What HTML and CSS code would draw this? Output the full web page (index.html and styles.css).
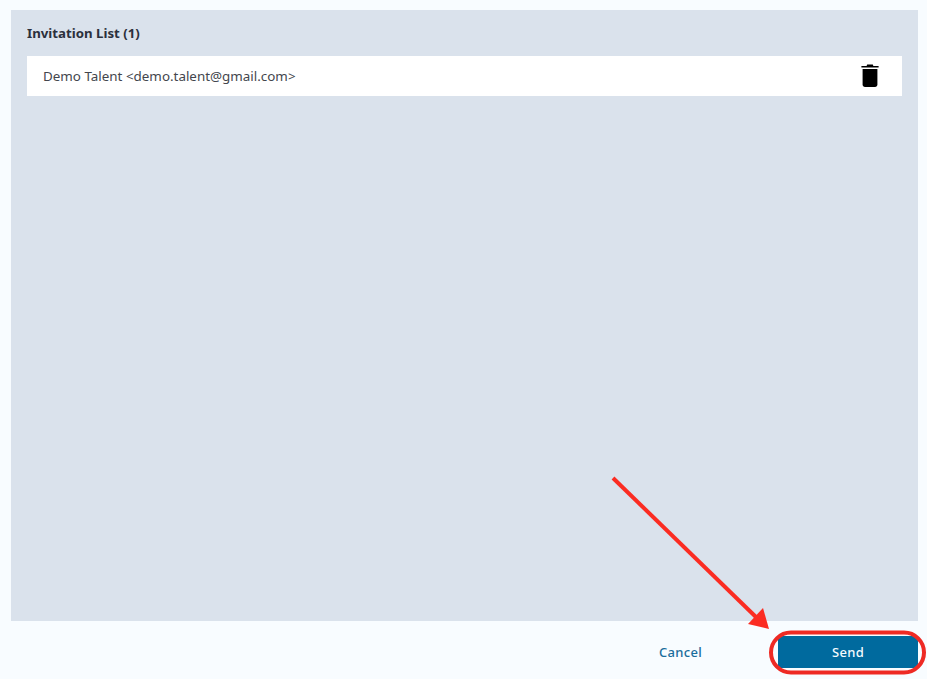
FILE: index.html
```html
<!DOCTYPE html>
<html lang="en">
<head>
<meta charset="utf-8">
<title>Invitation List</title>
<link rel="stylesheet" href="styles.css">
</head>
<body>
<div class="page">
  <section class="panel">
    <h2 class="panel-title">Invitation List (1)</h2>
    <div class="invite-row">
      <span class="invite-text">Demo Talent &lt;demo.talent@gmail.com&gt;</span>
      <button class="icon-btn" aria-label="Delete">
        <svg width="18" height="24" viewBox="0 0 18 24" class="trash"><path d="M5.6 2 L6.2 0.4 H11.8 L12.4 2 H17.6 V3.6 H0.4 V2 Z" fill="#000"/><path d="M1.6 5 H16.4 V20.6 C16.4 22.2 15.4 23 14 23 H4 C2.6 23 1.6 22.2 1.6 20.6 Z" fill="#000"/></svg>
      </button>
    </div>
  </section>
  <footer class="actions">
    <a class="cancel">Cancel</a>
    <button class="send">Send</button>
  </footer>
  <svg class="annotation" width="927" height="679" viewBox="0 0 927 679">
    <rect x="771" y="632.5" width="153" height="40" rx="20" fill="none" stroke="#ee2a24" stroke-width="4"/>
    <line x1="613" y1="478" x2="758" y2="619" stroke="#fb2c22" stroke-width="4"/>
    <polygon points="769,629 748,624 763,608" fill="#fb2c22"/>
  </svg>
</div>
</body>
</html>
```

FILE: styles.css
```css
* { box-sizing: border-box; }
html, body { margin: 0; padding: 0; }
body {
  background: #f8fcff;
  font-family: "Noto Sans", "Liberation Sans", sans-serif;
  color: #2b2f38;
}
.page {
  position: relative;
  width: 927px;
  height: 679px;
  padding: 10px 9px 0 11px;
  overflow: hidden;
}
.panel {
  height: 611px;
  background: #dae2ec;
  padding: 14px 16px 0;
}
.panel-title {
  margin: 0 0 14px;
  font-size: 13.25px;
  line-height: 18px;
  font-weight: 700;
  color: #2b303c;
}
.invite-row {
  display: flex;
  align-items: center;
  justify-content: space-between;
  height: 40px;
  background: #fff;
  padding: 0 23px 0 16px;
}
.invite-text { font-size: 13.4px; line-height: 18px; color: #43464d; }
.icon-btn { display: flex; padding: 0; border: 0; background: none; }
.actions {
  display: flex;
  justify-content: flex-end;
  align-items: center;
  gap: 76px;
  padding-top: 15px;
}
.cancel { font-size: 13px; font-weight: 500; letter-spacing: 0.3px; color: #1a6d9c; }
.send {
  width: 140px;
  height: 32px;
  border: 0;
  border-radius: 2px;
  background: #006a9e;
  color: #f4fbff;
  font: 500 13px "Noto Sans", "Liberation Sans", sans-serif;
  letter-spacing: 0.3px;
}
.annotation { position: absolute; left: 0; top: 0; pointer-events: none; }
```
